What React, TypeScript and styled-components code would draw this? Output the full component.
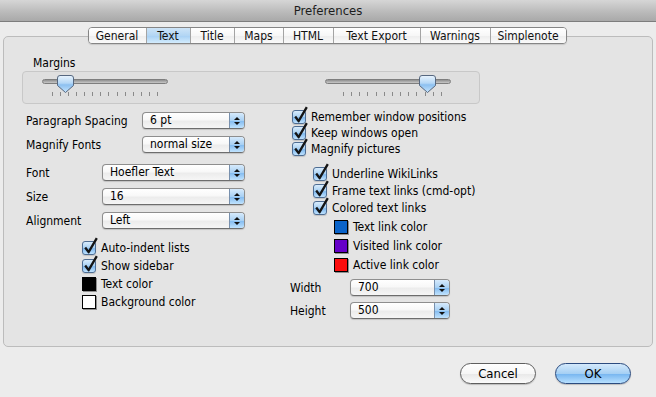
import React from "react";
import styled, { createGlobalStyle } from "styled-components";

const FONT = `"DejaVu Sans Condensed", "DejaVu Sans", "Liberation Sans", sans-serif`;

const Global = createGlobalStyle`
  html, body { margin: 0; padding: 0; background: #ececec; }
  body { font-family: ${FONT}; font-size: 12px; color: #000; }
  * { box-sizing: border-box; }
`;

const Window = styled.div`
  width: 656px;
  height: 397px;
  display: flex;
  flex-direction: column;
  background: #ececec;
  overflow: hidden;
`;

const TitleBar = styled.div`
  height: 22px;
  border-bottom: 1px solid #7d7d7d;
  background: linear-gradient(#d6d6d6, #b9b9b9 60%, #a9a9a9);
  display: flex;
  align-items: center;
  justify-content: center;
  font-size: 13px;
  color: #1c1c1c;
`;

const Body = styled.div`
  flex: 1;
  display: flex;
  flex-direction: column;
  padding: 5px 3px 0 3px;
`;

const TabBar = styled.div`
  align-self: center;
  display: flex;
  height: 17px;
  border: 1px solid #858585;
  border-radius: 4px;
  overflow: hidden;
  position: relative;
  z-index: 1;
  box-shadow: 0 1px 1px rgba(0, 0, 0, 0.12);
  margin-left: -2px;
`;

const Tab = styled.div<{ $w: number; $active?: boolean; $first?: boolean }>`
  width: ${(p) => p.$w}px;
  height: 15px;
  display: flex;
  align-items: center;
  justify-content: center;
  border-left: ${(p) => (p.$first ? "none" : "1px solid #a4a4a4")};
  background: ${(p) =>
    p.$active
      ? "linear-gradient(#cde4f8, #b3d6f4 50%, #a6cff4 51%, #d3ecfd)"
      : "linear-gradient(#ffffff, #f7f7f7 50%, #ededed 51%, #fafafa)"};
  font-size: 12px;
  color: #111;
`;

const Panel = styled.div`
  margin-top: -8px;
  height: 311px;
  border: 1px solid #bcbcbc;
  border-radius: 5px;
  background: #e4e4e4;
  padding: 19px 0 0 18px;
  display: flex;
  flex-direction: column;
`;

const GroupLabel = styled.div`
  height: 15px;
  line-height: 15px;
  margin-left: 11px;
`;

const GroupBox = styled.div`
  width: 458px;
  height: 33px;
  border: 1px solid #c8c8c8;
  border-radius: 4px;
  background: #dfdfdf;
  display: flex;
  padding: 3px 0 0 19px;
  gap: 157px;
`;

const SliderWrap = styled.div`
  position: relative;
  width: 126px;
  height: 25px;
  display: flex;
  flex-direction: column;
`;

const Track = styled.div`
  margin-top: 4px;
  height: 5px;
  border: 1px solid #7e7e7e;
  border-radius: 3px;
  background: linear-gradient(#8f8f8f, #c8c8c8);
`;

const Ticks = styled.div<{ $l: number; $r: number }>`
  margin-top: 8px;
  height: 4px;
  display: flex;
  justify-content: space-between;
  padding: 0 ${(p) => p.$r}px 0 ${(p) => p.$l}px;
`;

const Tick = styled.span`
  width: 1px;
  height: 4px;
  background: #8a8a8a;
`;

const Knob = styled.svg<{ $x: number }>`
  position: absolute;
  top: 0;
  left: ${(p) => p.$x - 8.5}px;
`;

const Slider = ({ pos, ticks, l, r, id }: { pos: number; ticks: number; l: number; r: number; id: string }) => (
  <SliderWrap>
    <Track />
    <Ticks $l={l} $r={r}>
      {Array.from({ length: ticks }).map((_, i) => (
        <Tick key={i} />
      ))}
    </Ticks>
    <Knob $x={pos} width="17" height="19" viewBox="0 0 17 19">
      <defs>
        <linearGradient id={id} x1="0" y1="0" x2="0" y2="1">
          <stop offset="0" stopColor="#eaf4fd" />
          <stop offset="0.45" stopColor="#b4d7f6" />
          <stop offset="0.55" stopColor="#8cc0f0" />
          <stop offset="1" stopColor="#c6e4fd" />
        </linearGradient>
      </defs>
      <path
        d="M3 0.5 H14 Q16.5 0.5 16.5 3 V10.5 L8.5 17.5 L0.5 10.5 V3 Q0.5 0.5 3 0.5 Z"
        fill={`url(#${id})`}
        stroke="#56677f"
        strokeWidth="1"
      />
    </Knob>
  </SliderWrap>
);

const Columns = styled.div`
  display: flex;
  margin-left: 4px;
`;

const LeftCol = styled.div`
  width: 264px;
  display: flex;
  flex-direction: column;
`;

const RightCol = styled.div`
  display: flex;
  flex-direction: column;
`;

const FormRow = styled.div<{ $mt: number }>`
  display: flex;
  align-items: center;
  height: 17px;
  margin-top: ${(p) => p.$mt}px;
`;

const Label = styled.span<{ $w: number }>`
  width: ${(p) => p.$w}px;
  flex: none;
`;

const PopupBox = styled.div<{ $w: number }>`
  width: ${(p) => p.$w}px;
  height: 17px;
  border: 1px solid #8e8e8e;
  border-bottom-color: #6d6d6d;
  border-radius: 4px;
  display: flex;
  overflow: hidden;
  background: linear-gradient(#ffffff, #f8f8f8 45%, #ececec 55%, #f6f6f6);
  box-shadow: 0 1px 1px rgba(0, 0, 0, 0.15);
`;

const PopupText = styled.span`
  flex: 1;
  padding-left: 7px;
  line-height: 15px;
  white-space: nowrap;
`;

const PopupArrows = styled.span`
  width: 15px;
  border-left: 1px solid #7890ad;
  background: linear-gradient(#d6eafc, #a9d1f4 50%, #80b9ef 51%, #c0e3fe);
  display: flex;
  flex-direction: column;
  align-items: center;
  justify-content: center;
  gap: 2px;
`;

const ArrowUp = styled.span`
  width: 0;
  height: 0;
  border-left: 3px solid transparent;
  border-right: 3px solid transparent;
  border-bottom: 3px solid #111;
`;

const ArrowDown = styled.span`
  width: 0;
  height: 0;
  border-left: 3px solid transparent;
  border-right: 3px solid transparent;
  border-top: 3px solid #111;
`;

const Popup = ({ w, value }: { w: number; value: string }) => (
  <PopupBox $w={w}>
    <PopupText>{value}</PopupText>
    <PopupArrows>
      <ArrowUp />
      <ArrowDown />
    </PopupArrows>
  </PopupBox>
);

const ItemGroup = styled.div<{ $ml: number; $mt: number }>`
  display: flex;
  flex-direction: column;
  margin-left: ${(p) => p.$ml}px;
  margin-top: ${(p) => p.$mt}px;
`;

const ItemRow = styled.div<{ $h: number }>`
  display: flex;
  align-items: center;
  height: ${(p) => p.$h}px;
  gap: 5px;
  white-space: nowrap;
`;

const CheckBox = styled.span`
  position: relative;
  width: 14px;
  height: 14px;
  flex: none;
  border: 1px solid #4e6d93;
  border-radius: 3px;
  background: linear-gradient(#d9ecfc, #a7d0f3 50%, #7fb8ee 55%, #bfe2fe);
  box-shadow: 0 1px 1px rgba(0, 0, 0, 0.15);
`;

const CheckMark = styled.svg`
  position: absolute;
  left: 0px;
  top: -5px;
  overflow: visible;
`;

const Swatch = styled.span<{ $c: string }>`
  width: 14px;
  height: 14px;
  flex: none;
  border: 1px solid #000;
  background: ${(p) => p.$c};
  box-shadow: 1px 1px 0 #8f8f8f;
`;

const Check = ({ label, h }: { label: string; h: number }) => (
  <ItemRow $h={h}>
    <CheckBox>
      <CheckMark width="16" height="18" viewBox="0 0 16 18">
        <path d="M2.2 10.5 L5.6 15.2 L13.8 1.2" fill="none" stroke="#141414" strokeWidth="2.3" strokeLinejoin="round" />
      </CheckMark>
    </CheckBox>
    {label}
  </ItemRow>
);

const ColorItem = ({ label, c, h }: { label: string; c: string; h: number }) => (
  <ItemRow $h={h}>
    <Swatch $c={c} />
    {label}
  </ItemRow>
);

const Footer = styled.div`
  display: flex;
  justify-content: flex-end;
  gap: 19px;
  padding: 16px 22px 0 0;
`;

const Button = styled.div<{ $primary?: boolean }>`
  width: 76px;
  height: 21px;
  border-radius: 11px;
  border: 1px solid ${(p) => (p.$primary ? "#2b4b7f" : "#5f5f5f")};
  background: ${(p) =>
    p.$primary
      ? "linear-gradient(#d4e9fb, #a6d0f4 50%, #76b5f0 52%, #b8e0fe)"
      : "linear-gradient(#ffffff, #f6f6f6 50%, #e8e8e8 52%, #fbfbfb)"};
  box-shadow: 0 1px 1px rgba(0, 0, 0, 0.2);
  display: flex;
  align-items: center;
  justify-content: center;
  font-size: 13px;
  color: #000;
`;

const tabs: [string, number][] = [
  ["General", 57],
  ["Text", 44],
  ["Title", 44],
  ["Maps", 49],
  ["HTML", 50],
  ["Text Export", 87],
  ["Warnings", 70],
  ["Simplenote", 76],
];

export default function App() {
  return (
    <>
      <Global />
      <Window>
        <TitleBar>Preferences</TitleBar>
        <Body>
          <TabBar>
            {tabs.map(([t, w], i) => (
              <Tab key={t} $w={w} $first={i === 0} $active={t === "Text"}>
                {t}
              </Tab>
            ))}
          </TabBar>
          <Panel>
            <GroupLabel>Margins</GroupLabel>
            <GroupBox>
              <Slider id="k1" pos={23.5} ticks={14} l={10} r={10} />
              <Slider id="k2" pos={102} ticks={13} l={18} r={9} />
            </GroupBox>
            <Columns>
              <LeftCol>
                <FormRow $mt={8}>
                  <Label $w={116}>Paragraph Spacing</Label>
                  <Popup w={103} value="6 pt" />
                </FormRow>
                <FormRow $mt={7}>
                  <Label $w={116}>Magnify Fonts</Label>
                  <Popup w={103} value="normal size" />
                </FormRow>
                <FormRow $mt={11}>
                  <Label $w={76}>Font</Label>
                  <Popup w={143} value="Hoefler Text" />
                </FormRow>
                <FormRow $mt={7}>
                  <Label $w={76}>Size</Label>
                  <Popup w={143} value="16" />
                </FormRow>
                <FormRow $mt={7}>
                  <Label $w={76}>Alignment</Label>
                  <Popup w={143} value="Left" />
                </FormRow>
                <ItemGroup $ml={56} $mt={10}>
                  <Check h={18} label="Auto-indent lists" />
                  <Check h={18} label="Show sidebar" />
                  <ColorItem h={18} c="#000000" label="Text color" />
                  <ColorItem h={18} c="#ffffff" label="Background color" />
                </ItemGroup>
              </LeftCol>
              <RightCol>
                <ItemGroup $ml={2} $mt={5}>
                  <Check h={16} label="Remember window positions" />
                  <Check h={16} label="Keep windows open" />
                  <Check h={16} label="Magnify pictures" />
                </ItemGroup>
                <ItemGroup $ml={23} $mt={8}>
                  <Check h={17} label="Underline WikiLinks" />
                  <Check h={17} label="Frame text links (cmd-opt)" />
                  <Check h={17} label="Colored text links" />
                </ItemGroup>
                <ItemGroup $ml={44} $mt={1}>
                  <ColorItem h={19} c="#0a63c9" label="Text link color" />
                  <ColorItem h={19} c="#6500c8" label="Visited link color" />
                  <ColorItem h={19} c="#fb0d0d" label="Active link color" />
                </ItemGroup>
                <FormRow $mt={5}>
                  <Label $w={60}>Width</Label>
                  <Popup w={100} value="700" />
                </FormRow>
                <FormRow $mt={6}>
                  <Label $w={60}>Height</Label>
                  <Popup w={100} value="500" />
                </FormRow>
              </RightCol>
            </Columns>
          </Panel>
          <Footer>
            <Button>Cancel</Button>
            <Button $primary>OK</Button>
          </Footer>
        </Body>
      </Window>
    </>
  );
}
